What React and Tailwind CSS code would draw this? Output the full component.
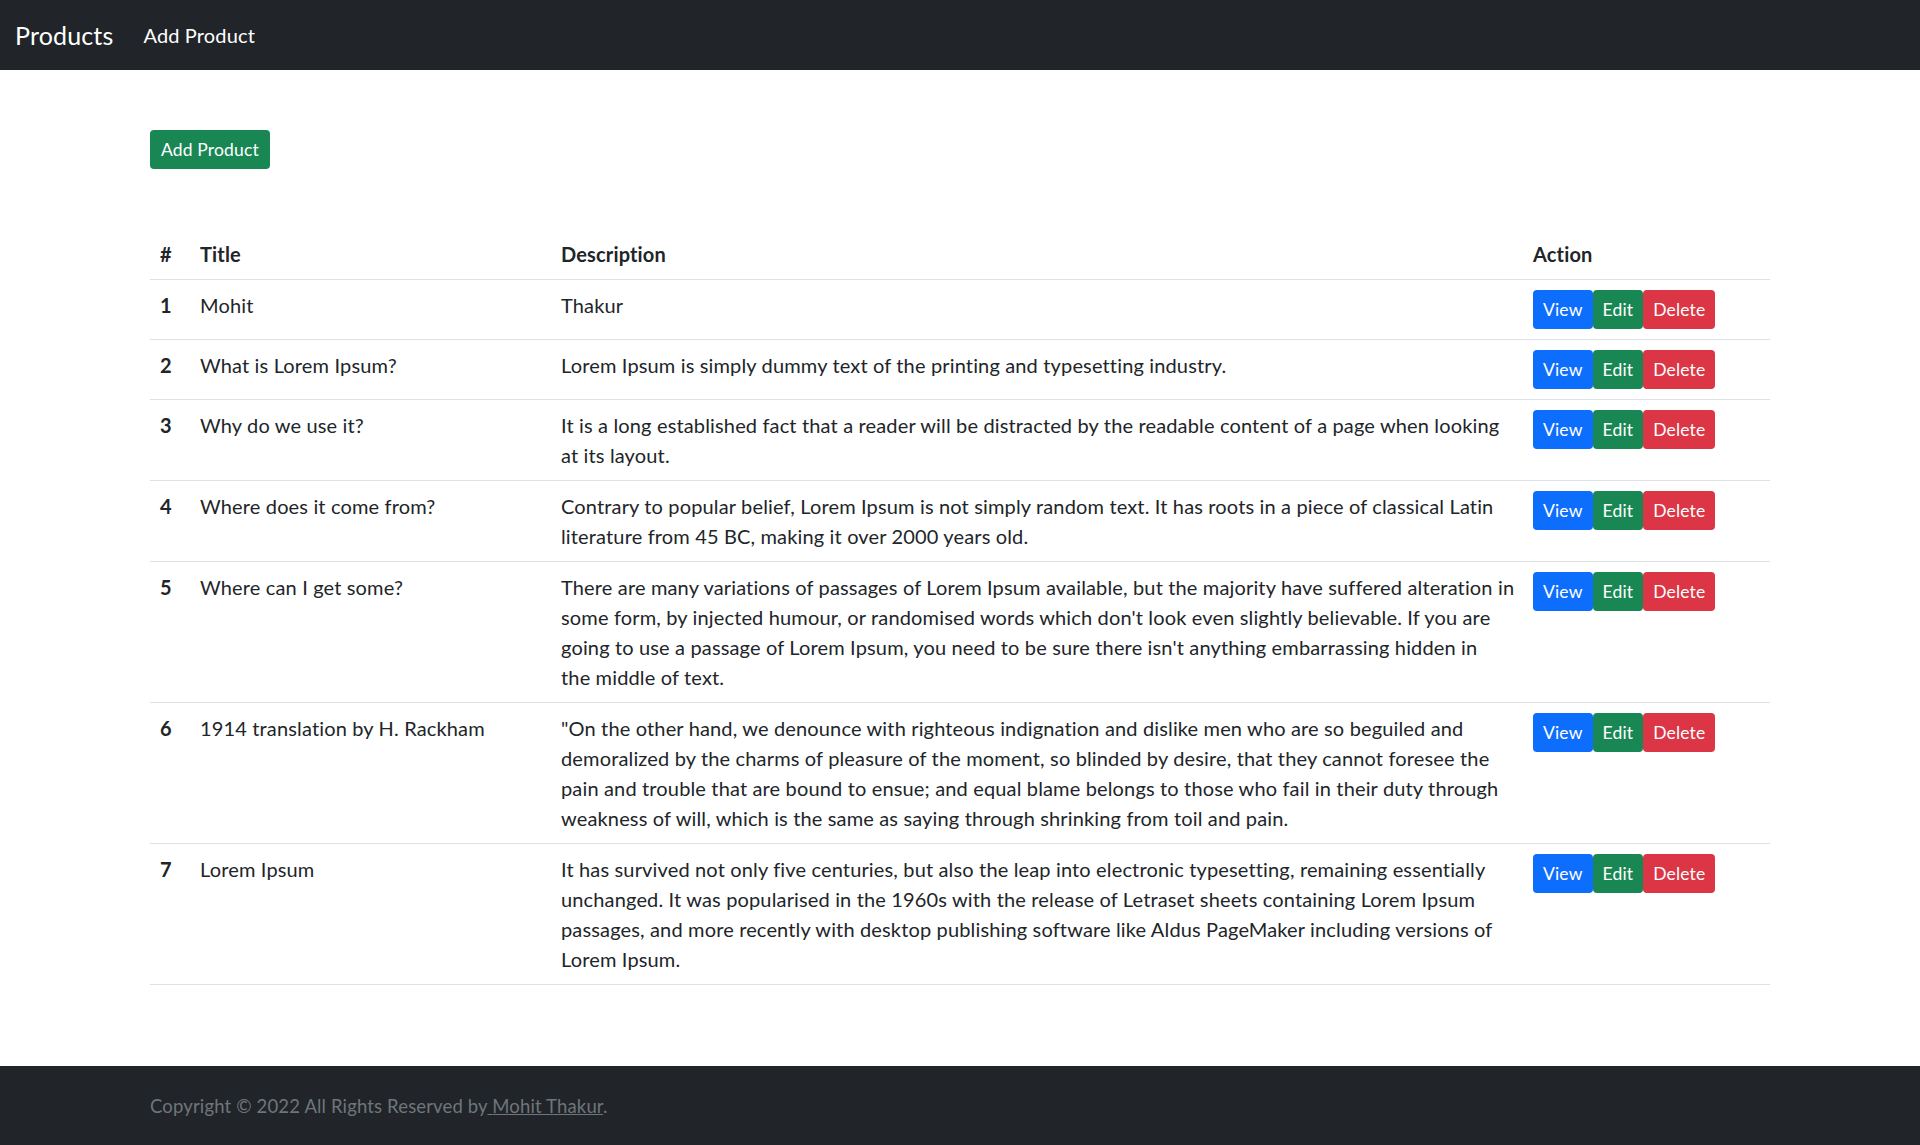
import React from "react";

const products = [
  { id: 1, title: "Mohit", description: "Thakur" },
  {
    id: 2,
    title: "What is Lorem Ipsum?",
    description: "Lorem Ipsum is simply dummy text of the printing and typesetting industry.",
  },
  {
    id: 3,
    title: "Why do we use it?",
    description:
      "It is a long established fact that a reader will be distracted by the readable content of a page when looking at its layout.",
  },
  {
    id: 4,
    title: "Where does it come from?",
    description:
      "Contrary to popular belief, Lorem Ipsum is not simply random text. It has roots in a piece of classical Latin literature from 45 BC, making it over 2000 years old.",
  },
  {
    id: 5,
    title: "Where can I get some?",
    description:
      "There are many variations of passages of Lorem Ipsum available, but the majority have suffered alteration in some form, by injected humour, or randomised words which don't look even slightly believable. If you are going to use a passage of Lorem Ipsum, you need to be sure there isn't anything embarrassing hidden in the\u00A0middle of text.",
  },
  {
    id: 6,
    title: "1914 translation by H. Rackham",
    description:
      "\"On the other hand, we denounce with righteous indignation and dislike men who are so beguiled and demoralized by the charms of pleasure of the moment, so blinded by desire, that they cannot foresee the pain and trouble that are bound to ensue; and equal blame belongs to those who fail in their duty through weakness of will, which is the same as saying through shrinking from toil and pain.",
  },
  {
    id: 7,
    title: "Lorem Ipsum",
    description:
      "It has survived not only five centuries, but also the leap into electronic typesetting, remaining essentially unchanged. It was popularised in the 1960s with the release of Letraset sheets containing Lorem Ipsum passages, and more recently with desktop publishing software like Aldus PageMaker including versions of Lorem Ipsum.",
  },
];

const btn = "inline-block h-[39px] px-[10px] rounded-[4px] text-[17.5px] leading-[39px] text-white";

export default function App() {
  return (
    <div
      className="min-h-screen bg-white text-[#212529] text-[20px] leading-[30px] tracking-[0.15px]"
      style={{ fontFamily: "Lato, 'Noto Sans', sans-serif" }}
    >
      <nav className="h-[70px] bg-[#212529] flex items-center px-[15px]">
        <a href="#" className="text-[25px] text-white mr-[20px]">
          Products
        </a>
        <a href="#" className="px-[10px] text-white">
          Add Product
        </a>
      </nav>

      <main className="w-[1650px] mx-auto px-[15px] pt-[60px] pb-[81px]">
        <button className="h-[39px] px-[11px] rounded-[4px] bg-[#198754] text-white text-[17.5px] leading-[39px]">
          Add Product
        </button>

        <table className="w-full mt-[60px] table-fixed border-collapse">
          <thead>
            <tr className="border-b border-[#dee2e6] text-left align-bottom">
              <th className="w-[40px] p-[10px] font-bold">#</th>
              <th className="w-[361px] p-[10px] font-bold">Title</th>
              <th className="w-[972px] p-[10px] font-bold">Description</th>
              <th className="p-[10px] font-bold">Action</th>
            </tr>
          </thead>
          <tbody>
            {products.map((p) => (
              <tr key={p.id} className="border-b border-[#dee2e6] align-top">
                <th className="p-[10px] text-left font-bold">{p.id}</th>
                <td className="p-[10px]">{p.title}</td>
                <td className="py-[10px] pl-[10px] pr-[6px]">{p.description}</td>
                <td className="p-[10px]">
                  <div className="flex">
                    <a href="#" className={`${btn} bg-[#0d6efd]`}>View</a>
                    <a href="#" className={`${btn} bg-[#198754]`}>Edit</a>
                    <a href="#" className={`${btn} bg-[#dc3545]`}>Delete</a>
                  </div>
                </td>
              </tr>
            ))}
          </tbody>
        </table>
      </main>

      <footer className="bg-[#212529] h-[80px]">
        <div className="w-[1650px] mx-auto px-[15px] pt-[25px] text-[18.5px] text-[#6f757b]">
          Copyright © 2022 All Rights Reserved by
          <a href="#" className="underline">
            {" "}Mohit Thakur
          </a>
          .
        </div>
      </footer>
    </div>
  );
}
